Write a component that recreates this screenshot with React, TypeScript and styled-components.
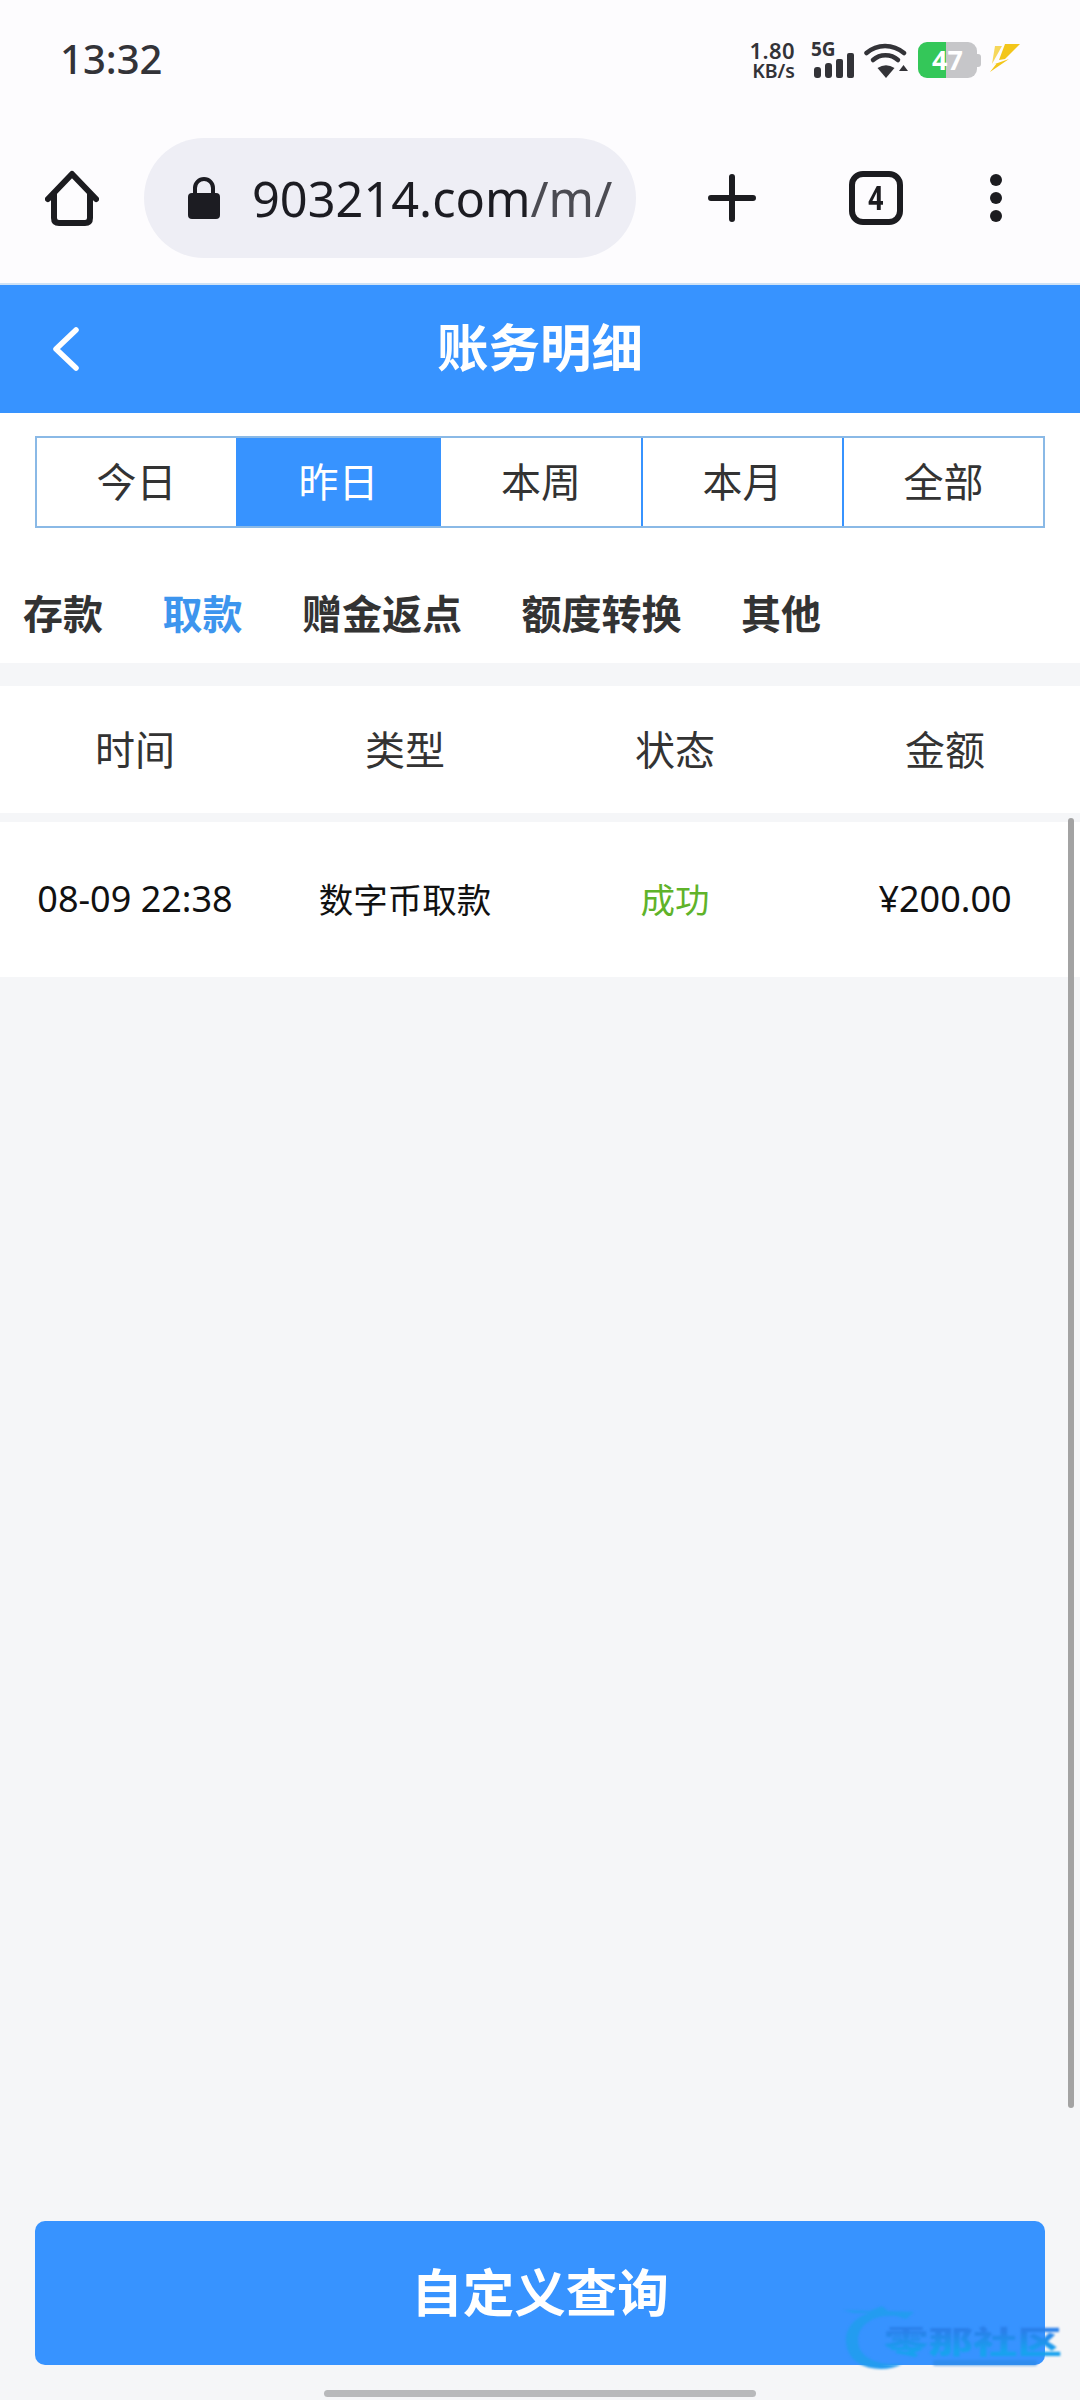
import React from "react";
import styled, { createGlobalStyle } from "styled-components";

const Global = createGlobalStyle`
  html, body { margin: 0; padding: 0; background: #f5f6f8; }
  * { box-sizing: border-box; }
  body { font-family: "Noto Sans", "Noto Sans CJK SC", sans-serif; }
`;

const Screen = styled.div`
  position: relative;
  width: 1080px;
  height: 2400px;
  overflow: hidden;
  display: flex;
  flex-direction: column;
  background: #f5f6f8;
  font-family: "Noto Sans", "Noto Sans CJK SC", sans-serif;
`;

const Chrome = styled.div`
  height: 285px;
  flex: none;
  background: #fdfcfe;
  border-bottom: 2px solid #cfe2f5;
  display: flex;
  flex-direction: column;
`;

const StatusBar = styled.div`
  height: 120px;
  flex: none;
  padding: 0 60px;
  display: flex;
  justify-content: space-between;
  align-items: flex-start;
`;

const Clock = styled.div`
  margin-top: 31px;
  font-size: 40px;
  line-height: 56px;
  font-weight: 500;
  color: #333338;
`;

const StatusIcons = styled.div`
  margin-top: 42px;
  display: flex;
  align-items: flex-start;
`;

const Speed = styled.div`
  width: 45px;
  margin-right: 16px;
  display: flex;
  flex-direction: column;
  align-items: flex-end;
  color: #333338;
  font-weight: 600;
`;

const SpeedValue = styled.span`
  font-size: 22px;
  line-height: 17px;
  letter-spacing: 0.4px;
  white-space: nowrap;
`;

const SpeedUnit = styled.span`
  margin-top: 3px;
  font-size: 19.5px;
  line-height: 17px;
  white-space: nowrap;
`;

const Signal = styled.div`
  width: 43px;
  height: 36px;
  margin-right: 10px;
  position: relative;
  color: #333338;
`;

const NetLabel = styled.span`
  display: block;
  font-size: 19px;
  line-height: 14px;
  font-weight: 700;
`;

const Icon = styled.svg`
  display: block;
  flex: none;
`;

const SignalBars = styled(Icon)`
  position: absolute;
  left: 3px;
  top: 11px;
`;

const Battery = styled.div`
  width: 59px;
  height: 36px;
  margin-left: 10px;
  border-radius: 9px;
  background: linear-gradient(90deg, #34c759 0 28px, #c6c6c9 28px);
  color: #fff;
  font-size: 27px;
  line-height: 36px;
  font-weight: 700;
  text-align: center;
  position: relative;
  &::after {
    content: "";
    position: absolute;
    right: -4px;
    top: 12px;
    width: 4px;
    height: 13px;
    border-radius: 0 3px 3px 0;
    background: #c6c6c9;
  }
`;

const Bolt = styled(Icon)`
  margin: 1px 0 0 12px;
`;

const ToolBar = styled.div`
  height: 120px;
  flex: none;
  margin-top: 18px;
  padding-left: 45px;
  display: flex;
  align-items: center;
`;

const HomeSlot = styled.div`
  width: 99px;
  flex: none;
`;

const UrlPill = styled.div`
  width: 492px;
  height: 120px;
  flex: none;
  border-radius: 60px;
  background: #eeeef5;
  padding-left: 44px;
  display: flex;
  align-items: center;
  gap: 32px;
  font-size: 48.7px;
  color: #1c1c22;
  overflow: hidden;
  white-space: nowrap;
`;

const UrlPath = styled.span`
  color: #4b4b52;
`;

const ToolIcons = styled.div`
  display: flex;
  align-items: center;
  margin-left: 72px;
`;

const PlusSlot = styled.div`
  width: 141px;
  flex: none;
`;

const TabsSlot = styled.div`
  width: 141px;
  flex: none;
`;

const TabCount = styled.div`
  width: 54px;
  height: 54px;
  border: 6px solid #1c1c20;
  border-radius: 14px;
  display: flex;
  align-items: center;
  justify-content: center;
  font-family: "Roboto", sans-serif;
  font-size: 34px;
  font-weight: 700;
  color: #1c1c20;
`;

const TabDigit = styled.span`
  display: block;
  line-height: 1;
  transform: scaleX(0.82);
`;

const NavBar = styled.header`
  height: 128px;
  flex: none;
  padding-bottom: 9px;
  background: #3793ff;
  position: relative;
  display: flex;
  align-items: center;
  justify-content: center;
  color: #fff;
  font-size: 51.5px;
  font-weight: 700;
  font-family: "Noto Sans CJK SC", sans-serif;
`;

const BackIcon = styled(Icon)`
  position: absolute;
  left: 50px;
  top: 42px;
`;

const FilterPanel = styled.section`
  background: #fff;
  height: 250px;
  flex: none;
  padding: 23px 35px 0;
  font-family: "Noto Sans CJK SC", sans-serif;
`;

const Segments = styled.div`
  display: grid;
  grid-template-columns: 199px 203px 202px 201px 1fr;
  height: 92px;
  border: 2px solid #8ab9e6;
`;

const Segment = styled.div<{ $active?: boolean }>`
  display: flex;
  align-items: center;
  justify-content: center;
  padding-bottom: 5px;
  font-size: 40px;
  color: ${(p) => (p.$active ? "#fff" : "#333")};
  background: ${(p) => (p.$active ? "#3793ff" : "#fff")};
  & + & {
    border-left: 2px solid ${(p) => (p.$active ? "#3793ff" : "#7db2e6")};
  }
`;

const Categories = styled.nav`
  display: flex;
  gap: 59.5px;
  margin: 55px 0 0 -12px;
`;

const Category = styled.span<{ $active?: boolean }>`
  font-size: 40px;
  line-height: 58px;
  font-weight: 700;
  color: ${(p) => (p.$active ? "#3d95ee" : "#333")};
`;

const TableHead = styled.div`
  margin-top: 23px;
  height: 127px;
  flex: none;
  background: #fff;
  display: grid;
  grid-template-columns: repeat(4, 270px);
  font-family: "Noto Sans CJK SC", sans-serif;
`;

const HeadCell = styled.div`
  display: flex;
  align-items: center;
  justify-content: center;
  padding-bottom: 3px;
  font-size: 40px;
  color: #333;
`;

const TableRow = styled.div`
  margin-top: 9px;
  height: 155px;
  flex: none;
  background: #fff;
  display: grid;
  grid-template-columns: repeat(4, 270px);
  font-family: "Noto Sans CJK SC", sans-serif;
`;

const Cell = styled.div<{ $color?: string }>`
  display: flex;
  align-items: center;
  justify-content: center;
  padding-bottom: 3px;
  font-size: 34.5px;
  color: ${(p) => p.$color ?? "#111"};
  white-space: nowrap;
`;

const NumCell = styled(Cell)`
  font-family: "Noto Sans", "Noto Sans CJK SC", sans-serif;
  font-size: 36px;
`;

const Spacer = styled.div`
  flex: 1;
`;

const Footer = styled.div`
  flex: none;
  padding: 0 35px 35px;
`;

const QueryButton = styled.button`
  display: block;
  width: 1010px;
  height: 144px;
  border: 0;
  padding: 0 0 7px;
  border-radius: 10px;
  background: #3793ff;
  color: #fff;
  font-family: "Noto Sans CJK SC", sans-serif;
  font-size: 51.5px;
  font-weight: 700;
`;

const Scrollbar = styled.div`
  position: absolute;
  left: 1068px;
  top: 818px;
  width: 6px;
  height: 1290px;
  border-radius: 3px;
  background: #a3a3a3;
`;

const HomeIndicator = styled.div`
  position: absolute;
  left: 324px;
  top: 2390px;
  width: 432px;
  height: 7px;
  border-radius: 4px;
  background: #b8b9bb;
`;

const Watermark = styled.div`
  position: absolute;
  left: 840px;
  top: 2302px;
  width: 230px;
  height: 80px;
  filter: blur(1.2px);
  pointer-events: none;
`;

const MarkText = styled.span`
  position: absolute;
  left: 44px;
  top: 12px;
  font-family: "Noto Sans CJK SC", sans-serif;
  font-size: 44.5px;
  line-height: 52px;
  font-weight: 900;
  white-space: nowrap;
  transform: scaleY(0.68);
  background: linear-gradient(180deg, #2a80ea 25%, #18a2ee 80%);
  -webkit-background-clip: text;
  background-clip: text;
  -webkit-text-fill-color: transparent;
`;

const ranges = ["今日", "昨日", "本周", "本月", "全部"];
const cats = ["存款", "取款", "赠金返点", "额度转换", "其他"];
const heads = ["时间", "类型", "状态", "金额"];

export default function App() {
  return (
    <Screen>
      <Global />
      <Chrome>
        <StatusBar>
          <Clock>13:32</Clock>
          <StatusIcons>
            <Speed>
              <SpeedValue>1.80</SpeedValue>
              <SpeedUnit>KB/s</SpeedUnit>
            </Speed>
            <Signal>
              <NetLabel>5G</NetLabel>
              <SignalBars width="40" height="25" viewBox="0 0 40 25" fill="currentColor">
                <rect x="0" y="14" width="7" height="11" rx="3" />
                <rect x="11" y="10" width="7" height="15" rx="3" />
                <rect x="22" y="6" width="7" height="19" rx="2" />
                <rect x="33" y="0" width="7" height="25" rx="2" />
              </SignalBars>
            </Signal>
            <Icon width="44" height="36" viewBox="0 0 44 36" fill="none" stroke="#333338" strokeLinecap="round">
              <path d="M2.5 11 C13 1.5 29 1.5 40 11" strokeWidth="4.5" />
              <path d="M9 18 C16 11.5 27 11.5 34 18" strokeWidth="4.5" />
              <path d="M22 36 L13.5 26 Q22 20.5 30.5 26 Z" fill="#333338" stroke="none" />
              <path d="M35 29 L44 29 L39.5 23 Z" fill="#333338" stroke="none" />
            </Icon>
            <Battery>47</Battery>
            <Bolt width="31" height="30" viewBox="0 0 31 30">
              <path d="M6 3 L13 3 L3 21 Z" fill="#f6d75a" />
              <path d="M31 1 L16 1 L10 17 L16 16 Z" fill="#f3c61a" />
              <path d="M20 16 L1 29 L8 20 L3 22 Z" fill="#f3c61a" />
            </Bolt>
          </StatusIcons>
        </StatusBar>
        <ToolBar>
          <HomeSlot>
            <Icon width="54" height="56" viewBox="0 0 54 56" fill="none" stroke="#1c1c20" strokeWidth="6" strokeLinejoin="round" strokeLinecap="round">
              <path d="M3 29 L27 4 L51 29" />
              <path d="M9 24 V48 Q9 53 14 53 H40 Q45 53 45 48 V24" />
            </Icon>
          </HomeSlot>
          <UrlPill>
            <Icon width="32" height="42" viewBox="0 0 32 42" fill="#1c1c22">
              <path d="M7 19 V11 a9 9 0 0 1 18 0 V19" fill="none" stroke="#1c1c22" strokeWidth="4" />
              <rect x="0" y="16" width="32" height="26" rx="4" />
            </Icon>
            <span>
              903214.com<UrlPath>/m/</UrlPath>
            </span>
          </UrlPill>
          <ToolIcons>
            <PlusSlot>
              <Icon width="48" height="48" viewBox="0 0 48 48" stroke="#1c1c20" strokeWidth="6" strokeLinecap="round">
                <path d="M3 24 H45 M24 3 V45" />
              </Icon>
            </PlusSlot>
            <TabsSlot>
              <TabCount>
                <TabDigit>4</TabDigit>
              </TabCount>
            </TabsSlot>
            <Icon width="12" height="48" viewBox="0 0 12 48" fill="#1c1c20">
              <circle cx="6" cy="6" r="6" />
              <circle cx="6" cy="24" r="6" />
              <circle cx="6" cy="42" r="6" />
            </Icon>
          </ToolIcons>
        </ToolBar>
      </Chrome>

      <NavBar>
        <BackIcon width="30" height="44" viewBox="0 0 30 44" fill="none" stroke="#fff" strokeWidth="5.5" strokeLinecap="round" strokeLinejoin="round">
          <path d="M26 3 L6 22 L26 41" />
        </BackIcon>
        账务明细
      </NavBar>

      <FilterPanel>
        <Segments>
          {ranges.map((r, i) => (
            <Segment key={r} $active={i === 1}>
              {r}
            </Segment>
          ))}
        </Segments>
        <Categories>
          {cats.map((c, i) => (
            <Category key={c} $active={i === 1}>
              {c}
            </Category>
          ))}
        </Categories>
      </FilterPanel>

      <TableHead>
        {heads.map((h) => (
          <HeadCell key={h}>{h}</HeadCell>
        ))}
      </TableHead>

      <TableRow>
        <NumCell>08-09 22:38</NumCell>
        <Cell>数字币取款</Cell>
        <Cell $color="#5fb32a">成功</Cell>
        <NumCell>¥200.00</NumCell>
      </TableRow>

      <Spacer />

      <Footer>
        <QueryButton>自定义查询</QueryButton>
      </Footer>

      <Scrollbar />
      <HomeIndicator />
      <Watermark>
        <Icon width="230" height="80" viewBox="0 0 230 80" fill="none">
          <path d="M3 8 L30 9 L42 4 L48 9 L74 10 L66 17 L56 14 C32 12 18 24 18 38 C18 54 34 64 62 62 C44 72 8 68 6 40 C5 26 16 14 30 11 L14 11 Z" fill="#239cf0" />
          <rect x="93" y="58" width="104" height="6" rx="2" fill="#2a86e0" opacity="0.55" />
        </Icon>
        <MarkText>零那社区</MarkText>
      </Watermark>
    </Screen>
  );
}
